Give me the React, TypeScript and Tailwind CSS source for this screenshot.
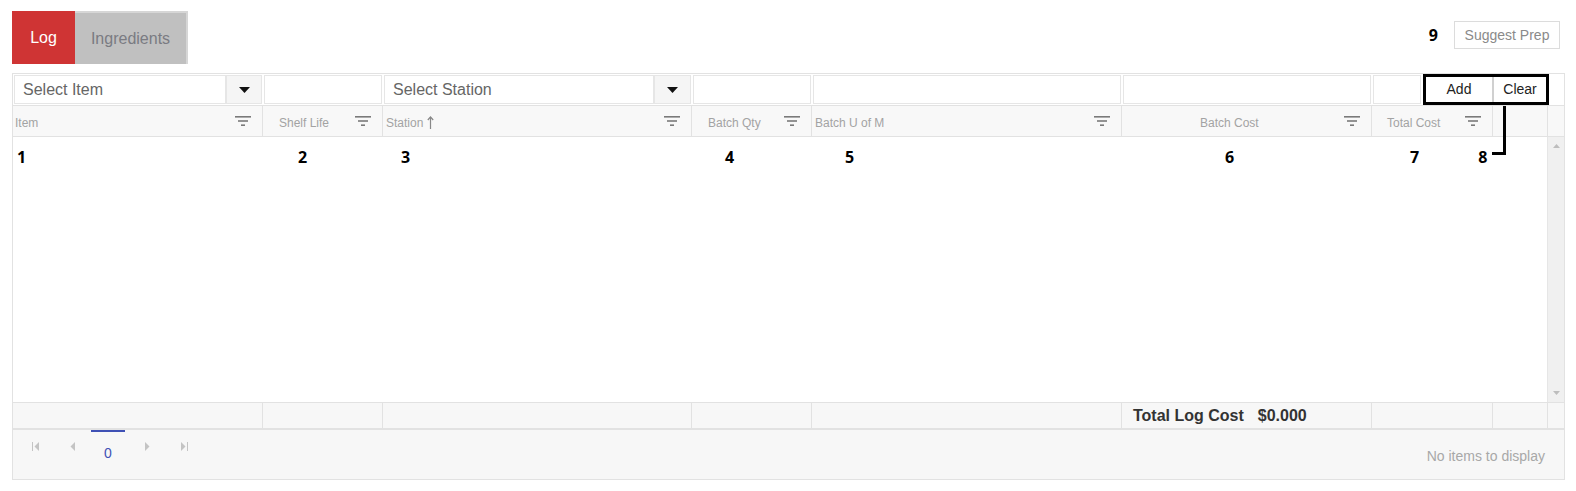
import React from 'react';

const font = { fontFamily: '"Liberation Sans", Arial, sans-serif' };
const noteFont = { fontFamily: '"Open Sans", "Noto Sans", sans-serif' };

function FilterIcon() {
  return (
    <svg width="16" height="10" viewBox="0 0 16 10" className="shrink-0">
      <rect x="0" y="0" width="16" height="1.6" fill="#7a7a7a" />
      <rect x="3" y="4.2" width="10" height="1.6" fill="#7a7a7a" />
      <rect x="6" y="8.4" width="4" height="1.6" fill="#7a7a7a" />
    </svg>
  );
}

function Caret() {
  return (
    <svg width="11" height="6" viewBox="0 0 11 6">
      <path d="M0 0 L11 0 L5.5 6 Z" fill="#111" />
    </svg>
  );
}

function SortUp() {
  return (
    <svg width="7" height="13" viewBox="0 0 7 13" className="ml-[4px] inline-block align-[-2px]">
      <path d="M3.5 1 L3.5 13" stroke="#888" strokeWidth="1.2" />
      <path d="M0.8 4 L3.5 1 L6.2 4" stroke="#888" strokeWidth="1.2" fill="none" />
    </svg>
  );
}

function SelectBox({ label, width, btn }: { label: string; width: string; btn: string }) {
  return (
    <div className={`${width} flex h-full p-[1px]`}>
      <div className="flex flex-1 items-center border border-[#e6e6e6] bg-white pl-[8px] text-[16px] text-[#666]">
        {label}
      </div>
      <div className={`${btn} flex items-center justify-center border border-[#e6e6e6] bg-[#f5f5f5]`}>
        <Caret />
      </div>
    </div>
  );
}

function FilterInput({ width }: { width: string }) {
  return (
    <div className={`${width} h-full p-[1px]`}>
      <div className="h-full border border-[#e6e6e6] bg-white" />
    </div>
  );
}

interface HeadCol {
  label: React.ReactNode;
  width: string;
  pl: string;
}

const headCols: HeadCol[] = [
  { label: 'Item', width: 'w-[250px]', pl: 'pl-[2px]' },
  { label: 'Shelf Life', width: 'w-[120px]', pl: 'pl-[16px]' },
  { label: <>Station<SortUp /></>, width: 'w-[309px]', pl: 'pl-[3px]' },
  { label: 'Batch Qty', width: 'w-[120px]', pl: 'pl-[16px]' },
  { label: 'Batch U of M', width: 'w-[310px]', pl: 'pl-[3px]' },
  { label: 'Batch Cost', width: 'w-[250px]', pl: 'pl-[78px]' },
  { label: 'Total Cost', width: 'w-[121px]', pl: 'pl-[15px]' },
];

function PagerIcon({ kind }: { kind: 'first' | 'prev' | 'next' | 'last' }) {
  return (
    <svg width="8" height="9" viewBox="0 0 8 9">
      {kind === 'first' && (
        <>
          <rect x="0" y="0" width="1" height="9" fill="#c4c4c4" />
          <path d="M7 0 L2.5 4.5 L7 9 Z" fill="#c4c4c4" />
        </>
      )}
      {kind === 'prev' && <path d="M6 0 L1.5 4.5 L6 9 Z" fill="#c4c4c4" />}
      {kind === 'next' && <path d="M2 0 L6.5 4.5 L2 9 Z" fill="#c4c4c4" />}
      {kind === 'last' && (
        <>
          <path d="M1 0 L5.5 4.5 L1 9 Z" fill="#c4c4c4" />
          <rect x="7" y="0" width="1" height="9" fill="#c4c4c4" />
        </>
      )}
    </svg>
  );
}

export default function App() {
  return (
    <div className="h-[491px] w-[1576px] overflow-hidden bg-white" style={font}>
      {/* top bar */}
      <div className="flex items-start justify-between pl-[12px] pr-[16px] pt-[11px]">
        <div className="flex h-[53px]">
          <div className="flex w-[63px] items-center justify-center bg-[#cf3434] text-[16px] text-white">
            Log
          </div>
          <div className="flex w-[113px] items-center justify-center border-t-2 border-r-2 border-[#d6d6d6] bg-[#c0c0c0] text-[16px] text-[#7a7b82]">
            Ingredients
          </div>
        </div>
        <div className="mt-[10px] flex items-center gap-[16px]">
          <span className="text-[16px] font-bold text-black" style={noteFont}>
            9
          </span>
          <button className="h-[28px] w-[106px] border border-[#dcdcdc] bg-white text-[14px] text-[#8a8a8a]">
            Suggest Prep
          </button>
        </div>
      </div>

      {/* grid */}
      <div className="relative mx-[12px] mt-[9px] w-[1553px] border border-[#e2e2e2]">
        {/* filter row */}
        <div className="flex h-[32px] border-b border-[#e2e2e2]">
          <SelectBox label="Select Item" width="w-[250px]" btn="w-[36px]" />
          <FilterInput width="w-[120px]" />
          <SelectBox label="Select Station" width="w-[309px]" btn="w-[37px]" />
          <FilterInput width="w-[120px]" />
          <FilterInput width="w-[310px]" />
          <FilterInput width="w-[250px]" />
          <FilterInput width="w-[50px]" />
          <div className="ml-[1px] flex h-full w-[126px] border-[3px] border-black bg-white text-[14px] text-[#222]">
            <div className="flex flex-1 items-center justify-center">Add</div>
            <div className="flex w-[54px] items-center justify-center border-l-2 border-[#d0d0d0]">Clear</div>
          </div>
          <div className="flex-1" />
        </div>

        {/* header row */}
        <div className="flex h-[31px] border-b border-[#e2e2e2] bg-[#f8f8f8] text-[12px] text-[#a3a3a3]">
          {headCols.map((c, i) => (
            <div
              key={i}
              className={`${c.width} ${c.pl} flex items-center justify-between border-r border-[#e2e2e2] pr-[11px]`}
            >
              <span className="pt-[3px]">{c.label}</span>
              <FilterIcon />
            </div>
          ))}
          <div className="w-[55px] border-r border-[#e2e2e2]" />
          <div className="flex-1" />
        </div>

        {/* body */}
        <div className="flex h-[265px]">
          <div className="flex flex-1 items-start pt-[8px] text-[16px] font-bold text-black" style={noteFont}>
            <div className="w-[250px] pl-[4px]">1</div>
            <div className="w-[120px] pl-[35px]">2</div>
            <div className="w-[309px] pl-[18px]">3</div>
            <div className="w-[120px] pl-[33px]">4</div>
            <div className="w-[310px] pl-[33px]">5</div>
            <div className="w-[250px] pl-[103px]">6</div>
            <div className="flex w-[121px] gap-[59px] pl-[38px]">
              <span>7</span>
              <span>8</span>
            </div>
          </div>
          <div className="flex w-[17px] flex-col items-center justify-between border-l border-[#e6e6e6] bg-[#f0f0f0] py-[7px]">
            <svg width="7" height="4" viewBox="0 0 7 4">
              <path d="M0 4 L3.5 0 L7 4 Z" fill="#bdbdbd" />
            </svg>
            <svg width="7" height="4" viewBox="0 0 7 4">
              <path d="M0 0 L3.5 4 L7 0 Z" fill="#bdbdbd" />
            </svg>
          </div>
        </div>

        {/* footer row */}
        <div className="flex h-[28px] border-t border-b-2 border-[#e2e2e2] bg-[#f7f7f7]">
          {['w-[250px]', 'w-[120px]', 'w-[309px]', 'w-[120px]', 'w-[310px]'].map((w, i) => (
            <div key={i} className={`${w} border-r border-[#e2e2e2]`} />
          ))}
          <div className="flex w-[250px] items-center border-r border-[#e2e2e2] pl-[11px] text-[16px] font-bold text-[#333]">
            Total Log Cost<span className="ml-[14px]">$0.000</span>
          </div>
          <div className="w-[121px] border-r border-[#e2e2e2]" />
          <div className="w-[55px] border-r border-[#e2e2e2]" />
          <div className="flex-1" />
        </div>

        {/* pager */}
        <div className="flex h-[49px] items-start justify-between bg-[#f7f7f7]">
          <div className="flex items-start">
            <div className="ml-[19px] mt-[12px] flex w-[37px] justify-start">
              <PagerIcon kind="first" />
            </div>
            <div className="mt-[12px] flex w-[22px] justify-start">
              <PagerIcon kind="prev" />
            </div>
            <div className="flex w-[34px] flex-col items-center border-t-2 border-[#3f51b5] pt-[14px] text-[14px] leading-none text-[#3f51b5]">
              0
            </div>
            <div className="ml-[18px] mt-[12px] flex w-[37px] justify-start">
              <PagerIcon kind="next" />
            </div>
            <div className="mt-[12px] flex w-[20px] justify-start">
              <PagerIcon kind="last" />
            </div>
          </div>
          <div className="mr-[19px] mt-[19px] text-[14px] leading-none text-[#a8a8a8]">No items to display</div>
        </div>

        {/* annotation connector for 8 */}
        <div className="absolute left-[1490px] top-[32px] h-[49px] w-[3px] bg-black" />
        <div className="absolute left-[1479px] top-[78px] h-[3px] w-[14px] bg-black" />
      </div>
    </div>
  );
}
